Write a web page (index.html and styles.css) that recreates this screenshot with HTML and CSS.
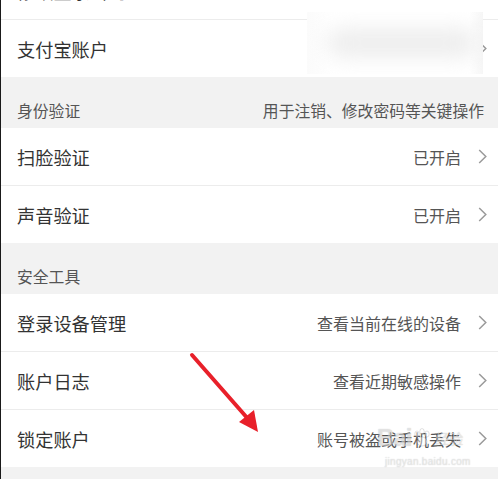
FILE: index.html
```html
<!DOCTYPE html>
<html lang="zh-CN">
<head>
<meta charset="utf-8">
<title>账户安全</title>
<link rel="stylesheet" href="styles.css">
</head>
<body>
<div class="page">
  <div class="group first">
    <div class="row">
      <span class="label">修改登录密码</span>
      <span class="value"></span>
      <svg class="chev" viewBox="0 0 9 15"><polyline points="1.2,1 7.8,7.5 1.2,14"/></svg>
    </div>
    <div class="row">
      <span class="label">支付宝账户</span>
      <span class="value"></span>
      <svg class="chev" viewBox="0 0 9 15"><polyline points="1.2,1 7.8,7.5 1.2,14"/></svg>
    </div>
  </div>

  <div class="section">
    <span class="section-title">身份验证</span>
    <span class="section-note">用于注销、修改密码等关键操作</span>
  </div>
  <div class="group">
    <div class="row">
      <span class="label">扫脸验证</span>
      <span class="value">已开启</span>
      <svg class="chev" viewBox="0 0 9 15"><polyline points="1.2,1 7.8,7.5 1.2,14"/></svg>
    </div>
    <div class="row">
      <span class="label">声音验证</span>
      <span class="value">已开启</span>
      <svg class="chev" viewBox="0 0 9 15"><polyline points="1.2,1 7.8,7.5 1.2,14"/></svg>
    </div>
  </div>

  <div class="section">
    <span class="section-title">安全工具</span>
  </div>
  <div class="group">
    <div class="row">
      <span class="label">登录设备管理</span>
      <span class="value">查看当前在线的设备</span>
      <svg class="chev" viewBox="0 0 9 15"><polyline points="1.2,1 7.8,7.5 1.2,14"/></svg>
    </div>
    <div class="row">
      <span class="label">账户日志</span>
      <span class="value">查看近期敏感操作</span>
      <svg class="chev" viewBox="0 0 9 15"><polyline points="1.2,1 7.8,7.5 1.2,14"/></svg>
    </div>
    <div class="row">
      <span class="label">锁定账户</span>
      <span class="value">账号被盗或手机丢失</span>
      <svg class="chev" viewBox="0 0 9 15"><polyline points="1.2,1 7.8,7.5 1.2,14"/></svg>
    </div>
  </div>

  <div class="blur-box"><div class="blur-blob"></div></div>

  <svg class="arrow" viewBox="0 0 498 479" width="498" height="479">
    <line x1="192" y1="355" x2="249" y2="420"/>
    <polygon points="239,422 258,432 254,410"/>
  </svg>

  <div class="watermark">
    <div class="wm-top"><span class="wm-bai">Bai</span><svg class="wm-paw" viewBox="0 0 20 20"><ellipse cx="5" cy="6" rx="2.2" ry="3"/><ellipse cx="10" cy="3.5" rx="2.2" ry="3"/><ellipse cx="15" cy="6" rx="2.2" ry="3"/><ellipse cx="10" cy="13.5" rx="5" ry="4.5"/></svg><span class="wm-jy">经验</span></div>
    <div class="wm-url">jingyan.baidu.com</div>
  </div>
</div>
</body>
</html>
```
FILE: styles.css
```css
html, body {
  margin: 0;
  padding: 0;
}
body {
  background: #f2f2f2;
  font-family: "Noto Sans CJK SC", "Noto Sans", sans-serif;
  width: 498px;
  height: 479px;
  overflow: hidden;
}
.page {
  position: relative;
  height: 479px;
  overflow: hidden;
  border-left: 1px solid #1a1a1a;
  box-sizing: border-box;
  background: #f2f2f2;
}
.group {
  background: #fff;
}
.first {
  margin-top: -38px;
}
.row {
  display: flex;
  align-items: center;
  height: 57px;
  padding: 0 11px 0 16px;
  border-bottom: 1px solid #ececec;
}
.row:last-child {
  border-bottom: none;
}
.label {
  flex: 1;
  font-size: 18.2px;
  color: #333;
  line-height: 24px;
}
.value {
  font-size: 16px;
  color: #555;
  margin-right: 17px;
  line-height: 22px;
}
.chev {
  width: 9px;
  height: 15px;
  flex: none;
}
.chev polyline {
  fill: none;
  stroke: #9a9a9a;
  stroke-width: 1.5;
}
.section {
  display: flex;
  justify-content: space-between;
  align-items: flex-start;
  height: 51px;
  box-sizing: border-box;
  padding: 23px 14px 0 16px;
  font-size: 15.8px;
  line-height: 22px;
}
.section-title {
  color: #555;
}
.section-note {
  color: #555;
}
.blur-box {
  position: absolute;
  left: 306px;
  top: 12px;
  width: 176px;
  height: 62px;
  background: linear-gradient(90deg, #fbfbfb 0%, #fff 15%, #fff 92%, #f6f6f6 100%);
  overflow: hidden;
}
.blur-blob {
  position: absolute;
  left: 20px;
  top: 16px;
  width: 150px;
  height: 30px;
  border-radius: 15px;
  background: #eeeeee;
  filter: blur(10px);
}
.arrow {
  position: absolute;
  left: -1px;
  top: 0;
  pointer-events: none;
}
.arrow line {
  stroke: #e8202a;
  stroke-width: 4;
  stroke-linecap: round;
}
.arrow polygon {
  fill: #e8202a;
}
.watermark {
  position: absolute;
  left: 376px;
  top: 424px;
  width: 110px;
  color: rgba(255, 255, 255, 0.5);
  font-family: "Liberation Sans", sans-serif;
  text-shadow: 0 0 1px rgba(0, 0, 0, 0.25);
  pointer-events: none;
}
.wm-top {
  display: flex;
  align-items: center;
  gap: 1px;
  height: 28px;
}
.wm-bai {
  font-size: 24px;
  font-weight: bold;
  letter-spacing: -1px;
}
.wm-paw {
  width: 20px;
  height: 20px;
}
.wm-paw ellipse {
  fill: rgba(255, 255, 255, 0.4);
  stroke: rgba(0, 0, 0, 0.15);
  stroke-width: 0.8;
}
.wm-jy {
  font-family: "Noto Sans CJK SC", sans-serif;
  font-size: 14px;
  margin-left: 2px;
}
.wm-url {
  font-size: 10px;
  margin-top: 4px;
  margin-left: 8px;
  letter-spacing: 0.3px;
}
```
